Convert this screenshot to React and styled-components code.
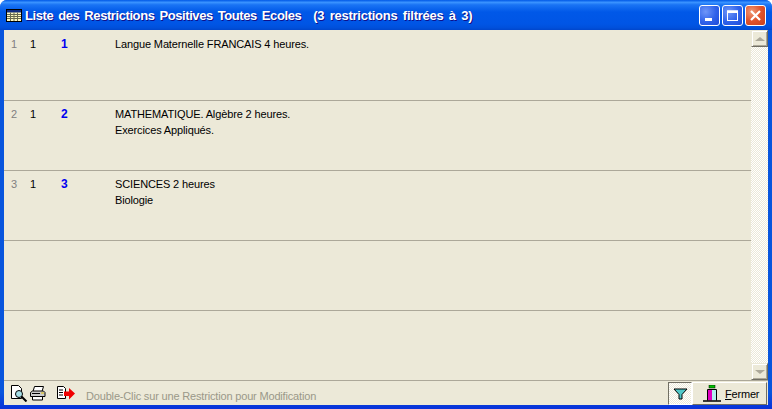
import React from "react";
import styled, { createGlobalStyle } from "styled-components";

const Global = createGlobalStyle`
  html, body { margin: 0; padding: 0; background: #fff; }
  #root { width: 772px; height: 409px; overflow: hidden; }
`;
const Win = styled.div`
  width: 772px; height: 409px; box-sizing: border-box;
  display: flex; flex-direction: column;
  background: linear-gradient(180deg, #0855dd 0%, #0855dd 96%, #0831d9 100%);
  font-family: "Liberation Sans", sans-serif;
  border-radius: 7px 7px 0 0; overflow: hidden;
`;
const TitleBar = styled.div`
  height: 30px; flex: none; display: flex; align-items: center;
  padding: 1px 6px 0 6px; box-sizing: border-box;
  background: linear-gradient(180deg, #0058e6 0%, #3a93ff 8%, #1a74f4 16%, #0058e8 40%, #0055e5 80%, #0050dc 92%, #0046cc 100%);
`;
const Title = styled.div`
  flex: 1; color: #fff; font: bold 13px "Liberation Sans", sans-serif;
  white-space: pre; text-shadow: 1px 1px 0 #0f1089; margin-left: 3px;
  letter-spacing: -0.42px; word-spacing: 1.8px;
`;
const TitleNote = styled.span`
  margin-left: 2px; letter-spacing: -0.25px; word-spacing: 2px;
`;
const WinBtn = styled.div`
  width: 21px; height: 21px; box-sizing: border-box; border: 1px solid #fff; border-radius: 3px;
  background: ${p => p.$close
    ? "radial-gradient(circle at 30% 30%, #ef9a78, #e0532c 50%, #c8401c)"
    : "radial-gradient(circle at 30% 30%, #6f96f8, #2f62ea 55%, #1f4bd8)"};
  margin-left: ${p => p.$first ? 0 : 2}px;
  display: flex; align-items: center; justify-content: center;
`;
const Body = styled.div`
  flex: 1; min-height: 0; margin: 0 4px 4px; background: #ece9d8;
  display: flex; flex-direction: column;
`;
const Main = styled.div`
  height: 350px; flex: none; display: flex;
`;
const List = styled.div`
  flex: 1; display: flex; flex-direction: column; padding-top: 1px;
`;
const Row = styled.div`
  height: 70px; flex: none; box-sizing: border-box; border-bottom: 1px solid #aca899; display: grid;
  grid-template-columns: 19px 31px 54px 1fr; padding: 5px 0 0 7px;
  font-size: 11px; line-height: 16px; color: #000; align-content: start;
  &:last-child { height: 69px; border-bottom: none; }
`;
const Num = styled.div`color: #808080; font-size: 11px;`;
const One = styled.div`font-size: 11px;`;
const Code = styled.div`color: #0000f0; font-weight: 700; font-size: 12px;`;
const Text = styled.div`white-space: pre; letter-spacing: -0.13px;`;
const Scroll = styled.div`
  width: 17px; flex: none; display: flex; flex-direction: column;
  background: repeating-conic-gradient(#fff 0 25%, #ece9d8 0 50%) 0 0 / 2px 2px;
`;
const Track = styled.div`flex: 1;`;
const Arrow = styled.div`
  width: 17px; height: 17px; box-sizing: border-box; background: #ece9d8;
  border: 1px solid; border-color: #ece9d8 #716f64 #716f64 #ece9d8;
  box-shadow: inset 1px 1px 0 #fff, inset -1px -1px 0 #aca899;
  display: flex; align-items: center; justify-content: center;
`;
const Caret = styled.div`
  width: 0; height: 0; border-left: 5px solid transparent; border-right: 5px solid transparent;
  ${p => p.$down ? "border-top: 4px solid #aca899;" : "border-bottom: 4px solid #aca899;"}
`;
const Footer = styled.div`
  flex: 1; border-top: 1px solid #aca899; display: flex; align-items: flex-end;
  padding: 0 1px 0 6px; box-sizing: border-box;
`;
const Tool = styled.div`
  width: ${p => p.$w}px; height: 24px; flex: none; display: flex; align-items: center;
`;
const Hint = styled.div`
  flex: 1; color: #9a9888; font-size: 11px; margin-left: 9px; padding-bottom: 1px; line-height: 16px;
  letter-spacing: -0.17px;
`;
const FilterBtn = styled.div`
  width: 24px; height: 23px; box-sizing: border-box;
  background: repeating-conic-gradient(#fff 0 25%, #ece9d8 0 50%) 0 0 / 2px 2px;
  border: 1px solid; border-color: #716f64 #fff #fff #716f64;
  display: flex; align-items: center; justify-content: center;
`;
const CloseBtn = styled.div`
  width: 75px; height: 23px; box-sizing: border-box; background: #ece9d8;
  border: 1px solid; border-color: #fff #716f64 #716f64 #fff;
  display: flex; align-items: center; gap: 4px; padding-left: 10px;
  font-size: 11px; letter-spacing: -0.2px; color: #000;
`;
const U = styled.span`text-decoration: underline;`;

const rows = [
  ["1", "1", "Langue Maternelle FRANCAIS 4 heures."],
  ["2", "2", "MATHEMATIQUE. Algèbre 2 heures.\nExercices Appliqués."],
  ["3", "3", "SCIENCES 2 heures\nBiologie"],
  ["", "", ""],
  ["", "", ""],
];

export default function App() {
  return (
    <Win>
      <Global />
      <TitleBar>
        <svg width="16" height="13" viewBox="0 0 16 13">
          <rect x=".5" y=".5" width="15" height="12" fill="#fff8c0" stroke="#000" />
          <rect x="1" y="1" width="14" height="2.5" fill="#102a80" />
          <path d="M1 5.500h14M1 7.500h14M1 9.500h14M4.500 3.500V12M8 3.500V12M11.500 3.500V12" stroke="#6a6a50" strokeWidth="1" />
        </svg>
        <Title>Liste des Restrictions Positives Toutes Ecoles  <TitleNote>(3 restrictions filtrées à 3)</TitleNote></Title>
        <WinBtn $first>
          <svg width="13" height="13" viewBox="0 0 13 13"><rect x="2" y="9" width="7" height="3" fill="#fff" /></svg>
        </WinBtn>
        <WinBtn>
          <svg width="13" height="13" viewBox="0 0 13 13"><rect x="1.500" y="2" width="10" height="9.500" fill="none" stroke="#fff" /><rect x="1" y="1.500" width="11" height="2.500" fill="#fff" /></svg>
        </WinBtn>
        <WinBtn $close>
          <svg width="13" height="13" viewBox="0 0 13 13"><path d="M2 2l9 9M11 2l-9 9" stroke="#fff" strokeWidth="2.200" /></svg>
        </WinBtn>
      </TitleBar>
      <Body>
        <Main>
          <List>
            {rows.map((r, i) => (
              <Row key={i}>
                <Num>{r[0]}</Num>
                <One>{r[0] && "1"}</One>
                <Code>{r[1]}</Code>
                <Text>{r[2]}</Text>
              </Row>
            ))}
          </List>
          <Scroll>
            <Arrow><Caret /></Arrow>
            <Track />
            <Arrow><Caret $down /></Arrow>
          </Scroll>
        </Main>
        <Footer>
          <Tool $w={19}>
            <svg width="18" height="17" viewBox="0 0 18 17">
              <path d="M1.500 .5h7l3 3v10h-10z" fill="#fff" stroke="#000" />
              <circle cx="9" cy="9" r="3.500" fill="#a8e0e8" stroke="#000" />
              <path d="M11.500 11.500l5 5" stroke="#000" strokeWidth="2" />
            </svg>
          </Tool>
          <Tool $w={28}>
            <svg width="17" height="15" viewBox="0 0 17 15">
              <path d="M5.500 .5h9l-1.500 5h-9z" fill="#fff" stroke="#000" />
              <path d="M1.500 6.500l2-1.500h11l1.500 1.500v4h-14.500z" fill="#ccc" stroke="#000" />
              <path d="M3.500 10.500h10v3.500h-10z" fill="#fff" stroke="#000" />
              <path d="M3 7.500h8" stroke="#000" />
              <path d="M12 7h3" stroke="#e0c000" />
            </svg>
          </Tool>
          <Tool $w={20}>
            <svg width="18" height="15" viewBox="0 0 18 15">
              <path d="M.5 .5h6l2 2v10h-8z" fill="#fff" stroke="#000" />
              <path d="M2 4h4M2 6.500h4M2 9h4" stroke="#000" />
              <path d="M7 5.500h5V2l6 5.500-6 6V10H7z" fill="#f00000" />
            </svg>
          </Tool>
          <Hint>Double-Clic sur une Restriction pour Modification</Hint>
          <FilterBtn>
            <svg width="15" height="14" viewBox="0 0 15 14">
              <path d="M1 2h13L9 7.500v4.500H6V7.500z" fill="#50c8c8" stroke="#000" strokeWidth="1" />
            </svg>
          </FilterBtn>
          <CloseBtn>
            <svg width="18" height="17" viewBox="0 0 18 17">
              <rect x="6" y="0" width="6" height="3" fill="#00c000" stroke="#000" strokeWidth=".5" />
              <rect x="5" y="4.500" width="4" height="11" fill="#e000c0" />
              <rect x="9" y="4.500" width="4" height="11" fill="#b0f0f0" />
              <path d="M4.500 4.500h9M4.500 4.500v11M13.500 4.500v11" stroke="#000" fill="none" />
              <path d="M0 16h18" stroke="#000" strokeWidth="1.500" />
            </svg>
            <span><U>F</U>ermer</span>
          </CloseBtn>
        </Footer>
      </Body>
    </Win>
  );
}
